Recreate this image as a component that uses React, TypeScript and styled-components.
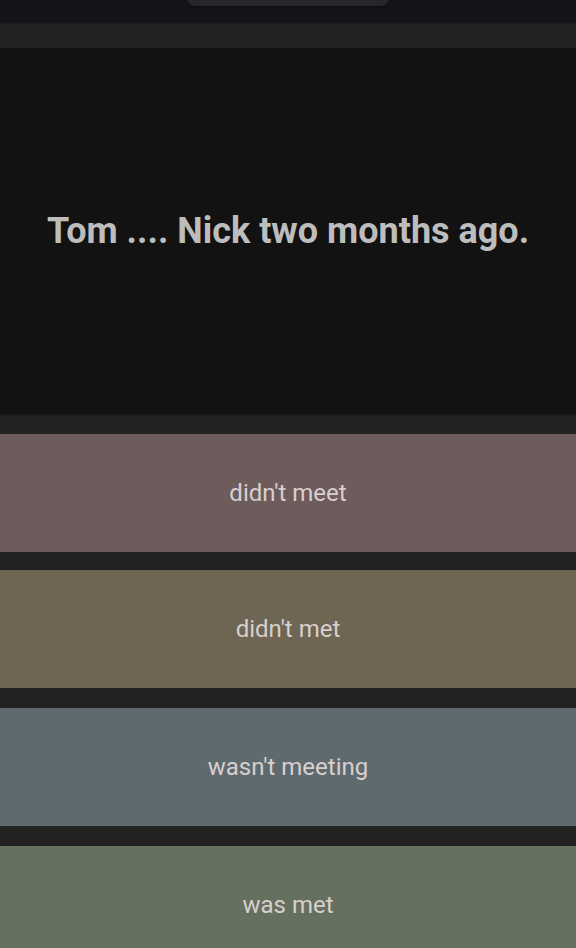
import React from 'react'
import styled, { createGlobalStyle } from 'styled-components'

const GlobalStyle = createGlobalStyle`
  html, body {
    margin: 0;
    padding: 0;
    background: #121212;
    font-family: Roboto, 'Noto Sans', sans-serif;
  }
`

const answers = [
  { text: "didn't meet", color: '#6e5c5c', gap: 0 },
  { text: "didn't met", color: '#6e6552', gap: 18 },
  { text: "wasn't meeting", color: '#5f6a6e', gap: 20 },
  { text: 'was met', color: '#65705e', gap: 20 },
]

const App: React.FC = () => {
  return (
    <Page>
      <GlobalStyle />
      <TopBar>
        <Handle />
      </TopBar>
      <Strip />
      <QuestionPanel>
        <Question>Tom .... Nick two months ago.</Question>
      </QuestionPanel>
      <Answers>
        {answers.map((a) => (
          <AnswerButton key={a.text} $color={a.color} $gap={a.gap}>
            {a.text}
          </AnswerButton>
        ))}
      </Answers>
    </Page>
  )
}

const Page = styled.div`
  width: 576px;
  height: 948px;
  overflow: hidden;
  display: flex;
  flex-direction: column;
  background: #222222;
`

const TopBar = styled.div`
  height: 22px;
  flex-shrink: 0;
  background: #141518;
  display: flex;
  justify-content: center;
  box-shadow: 0 1px 2px rgba(0, 0, 0, 0.4);
  position: relative;
  z-index: 1;
`

const Handle = styled.div`
  width: 200px;
  height: 6px;
  background: #26272b;
  border-radius: 0 0 8px 8px;
  box-shadow: 0 1px 2px rgba(0, 0, 0, 0.5);
`

const Strip = styled.div`
  height: 26px;
  flex-shrink: 0;
  background: #222222;
`

const QuestionPanel = styled.div`
  height: 366px;
  flex-shrink: 0;
  background: #121212;
  display: flex;
  align-items: center;
  justify-content: center;
  box-shadow: 0 1px 2px rgba(0, 0, 0, 0.4);
`

const Question = styled.div`
  font-family: Roboto, sans-serif;
  font-weight: 700;
  font-size: 36px;
  color: #bdbdbd;
`

const Answers = styled.div`
  display: flex;
  flex-direction: column;
  padding-top: 20px;
`

const AnswerButton = styled.div<{ $color: string; $gap: number }>`
  height: 118px;
  flex-shrink: 0;
  margin-top: ${(p) => p.$gap}px;
  background: ${(p) => p.$color};
  display: flex;
  align-items: center;
  justify-content: center;
  font-family: Roboto, sans-serif;
  font-size: 24px;
  color: #d8cfcf;
`

export default App
